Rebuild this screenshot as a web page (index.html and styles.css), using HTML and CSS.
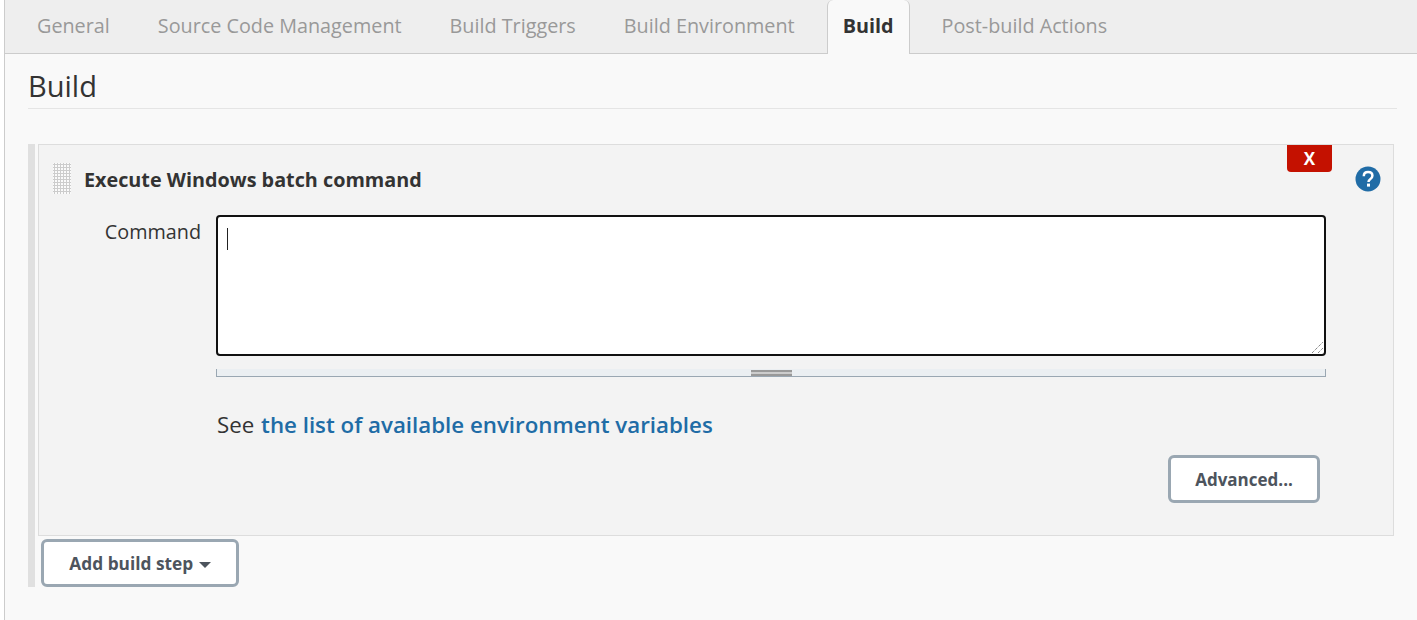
FILE: index.html
```html
<!DOCTYPE html>
<html lang="en">
<head>
  <meta charset="UTF-8">
  <title>Build</title>
  <link rel="stylesheet" href="styles.css">
</head>
<body>
  <div class="config-page">
    <!-- Tabs -->
    <div class="tab-bar">
      <a class="tab">General</a>
      <a class="tab">Source Code Management</a>
      <a class="tab">Build Triggers</a>
      <a class="tab">Build Environment</a>
      <a class="tab active">Build</a>
      <a class="tab">Post-build Actions</a>
    </div>

    <div class="section">
      <h2 class="section-title">Build</h2>

      <div class="step-list">
        <div class="step">
          <button class="delete-btn">X</button>
          <div class="step-head">
            <div class="grip"></div>
            <span class="step-name">Execute Windows batch command</span>
          </div>
          <div class="field">
            <label class="field-label">Command</label>
            <div class="field-body">
              <div class="command-box">
                <span class="caret"></span>
                <svg class="resizer" width="13" height="13" viewBox="0 0 13 13">
                  <path d="M1 12 L12 1 M7 12 L12 7" stroke="#555" stroke-width="1" stroke-dasharray="1 1" fill="none"/>
                </svg>
              </div>
              <div class="drag-bar"><span class="drag-handle"></span></div>
              <p class="env-note">See <a class="env-link">the list of available environment variables</a></p>
            </div>
            <svg class="help-icon" width="26" height="26" viewBox="0 0 26 26">
              <circle cx="13" cy="13" r="12.5" fill="#206ca6"/>
              <path d="M8.8 10.2 C8.8 7.6 10.7 6.1 13.1 6.1 C15.6 6.1 17.4 7.6 17.4 9.8 C17.4 11.5 16.5 12.4 15.2 13.2 C14 14 13.5 14.5 13.5 16" stroke="#fff" stroke-width="2.5" fill="none"/>
              <rect x="12" y="17.6" width="3" height="3" fill="#fff"/>
            </svg>
          </div>
          <div class="step-actions">
            <button class="btn">Advanced...</button>
          </div>
        </div>
        <button class="btn add-btn">Add build step <span class="arrow"></span></button>
      </div>
    </div>
  </div>
</body>
</html>
```

FILE: styles.css
```css
html, body {
  height: 100%;
}
body {
  margin: 0;
  background-color: #fff;
  font-family: "Open Sans", "Noto Sans", sans-serif;
  color: #333;
  overflow: hidden;
}
.config-page {
  margin-left: 4px;
  height: 100%;
  border-left: 1px solid #ccc;
  background-color: #f9f9f9;
}
.tab-bar {
  display: flex;
  gap: 16px;
  height: 53px;
  padding-left: 16px;
  background-color: #eee;
  border-bottom: 1px solid #ccc;
}
.tab {
  padding: 9px 16px 0;
  font-size: 19.8px;
  line-height: 34px;
  color: #999;
}
.tab.active {
  margin-bottom: -1px;
  padding: 9px 15px 0;
  color: #333;
  font-weight: 700;
  background-color: #f9f9f9;
  border: 1px solid #ccc;
  border-top: none;
  border-bottom: none;
  border-top-left-radius: 6px;
  border-top-right-radius: 6px;
}
.section {
  padding: 0 20px 0 23px;
}
.section-title {
  margin: 0;
  height: 55px;
  padding-top: 12px;
  box-sizing: border-box;
  font-size: 29px;
  line-height: 40px;
  font-weight: 400;
  border-bottom: 1px solid #e5e5e5;
}
.step-list {
  margin-top: 35px;
  border-left: 7px solid #e0e0e0;
  padding: 0 3px;
  height: 443px;
  box-sizing: border-box;
}
.step {
  position: relative;
  box-sizing: border-box;
  height: 392px;
  background-color: #f3f3f3;
  border: 1px solid #ddd;
}
.delete-btn {
  position: absolute;
  top: 0;
  right: 61px;
  width: 45px;
  height: 27px;
  padding: 0;
  border: none;
  border-radius: 0 0 4px 4px;
  background-color: #c41100;
  color: #fff;
  font-family: inherit;
  font-size: 17px;
  font-weight: 700;
}
.step-head {
  display: flex;
  align-items: center;
  gap: 13px;
  padding: 18px 0 0 14px;
  height: 31px;
}
.grip {
  width: 18px;
  height: 31px;
  background-color: #fafafa;
  background-image: radial-gradient(circle, #ccc 1.1px, transparent 1.1px);
  background-size: 3px 3px;
}
.step-name {
  padding-top: 2px;
  font-size: 19.8px;
  font-weight: 700;
  color: #333;
}
.field {
  display: flex;
  margin-top: 21px;
}
.field-label {
  width: 162px;
  text-align: right;
  font-size: 19.8px;
  line-height: 34px;
}
.field-body {
  width: 1110px;
  margin-left: 15px;
}
.help-icon {
  margin: -49px 0 0 29px;
}
.command-box {
  position: relative;
  box-sizing: border-box;
  height: 141px;
  background-color: #fff;
  border: 2px solid #111;
  border-radius: 4px;
}
.caret {
  position: absolute;
  top: 11px;
  left: 9px;
  width: 1px;
  height: 22px;
  background-color: #222;
}
.resizer {
  position: absolute;
  right: 0;
  bottom: 0;
}
.drag-bar {
  box-sizing: border-box;
  display: flex;
  justify-content: center;
  height: 8px;
  margin-top: 13px;
  background-color: #ebeff2;
  border: 1px solid #9aa7b2;
  border-top: none;
}
.drag-handle {
  width: 41px;
  height: 6px;
  margin-top: 1px;
  box-sizing: border-box;
  border-top: 2px solid #999;
  border-bottom: 2px solid #999;
  background-color: #ccc;
}
.env-note {
  margin: 33px 0 0 1px;
  font-size: 22.3px;
  line-height: 30px;
}
.env-link {
  margin-left: 1px;
  color: #206ca6;
  font-weight: 600;
}
.step-actions {
  display: flex;
  justify-content: flex-end;
  margin-top: 15px;
  padding-right: 73px;
}
.btn {
  box-sizing: border-box;
  height: 48px;
  border: 3px solid #9aa7b2;
  border-radius: 6px;
  background-color: #fff;
  color: #4d545d;
  font-family: inherit;
  font-size: 17px;
  font-weight: 700;
}
.step-actions .btn {
  width: 152px;
}
.add-btn {
  display: block;
  width: 198px;
  margin: 3px 0 0 3px;
  font-size: 17.3px;
}
.arrow {
  display: inline-block;
  margin-left: 1px;
  vertical-align: middle;
  border-left: 6.5px solid transparent;
  border-right: 6.5px solid transparent;
  border-top: 6.5px solid #4d545d;
}
```
